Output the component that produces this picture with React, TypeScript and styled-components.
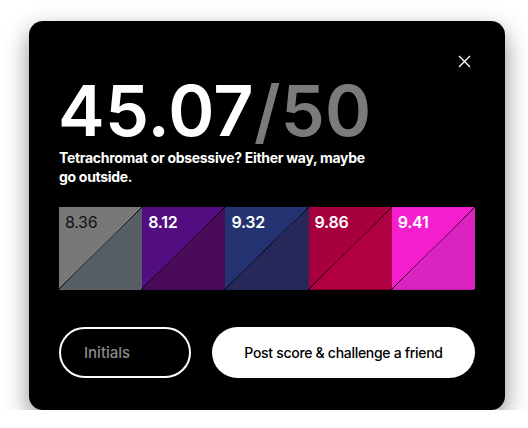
import React from "react";
import styled, { createGlobalStyle } from "styled-components";

const Global = createGlobalStyle`
  html, body { margin: 0; padding: 0; background: #ffffff; }
  body { font-family: Inter, "Liberation Sans", sans-serif; }
  * { box-sizing: border-box; }
`;

const Page = styled.div`
  padding: 21px 0 0 29px;
`;

const Card = styled.div`
  width: 476px;
  height: 389px;
  background: #000;
  border-radius: 14px;
  box-shadow: 0 10px 24px rgba(0, 0, 0, 0.45);
  padding: 0 30px;
  display: flex;
  flex-direction: column;
  position: relative;
`;

const CloseButton = styled.button`
  position: absolute;
  top: 33px;
  right: 34px;
  width: 14px;
  height: 14px;
  padding: 0;
  border: 0;
  background: transparent;
  cursor: pointer;
  display: flex;
  align-items: center;
  justify-content: center;
`;

const Score = styled.div`
  margin-top: 55px;
  font-size: 70px;
  line-height: 70px;
  font-weight: 600;
  letter-spacing: 0.3px;
  color: #fff;
  margin-left: -1px;
`;

const Total = styled.span`
  color: #7b7b7b;
`;

const Tagline = styled.p`
  margin: 2px 0 0;
  max-width: 318px;
  font-size: 14px;
  line-height: 19px;
  font-weight: 700;
  color: #fff;
  letter-spacing: -0.3px;
`;

const Swatches = styled.div`
  margin-top: 21px;
  display: grid;
  grid-template-columns: repeat(5, 1fr);
  height: 83px;
`;

const Swatch = styled.div<{ $a: string; $b: string; $dark?: boolean }>`
  background: linear-gradient(
    to bottom right,
    ${(p) => p.$a} calc(50% - 0.5px),
    rgba(0, 0, 0, 0.1) 50%,
    ${(p) => p.$b} calc(50% + 0.5px)
  );
  border-bottom: 1px solid rgba(0, 0, 0, 0.2);
  padding: 4px 6px;
  font-size: 16px;
  line-height: 22px;
  font-weight: ${(p) => (p.$dark ? 400 : 600)};
  letter-spacing: -0.3px;
  color: ${(p) => (p.$dark ? "#111" : "#fff")};
`;

const Actions = styled.div`
  margin-top: 37px;
  display: flex;
  gap: 21px;
  align-items: center;
`;

const InitialsInput = styled.input`
  width: 132px;
  height: 51px;
  border: 2px solid #fff;
  border-radius: 26px;
  background: transparent;
  color: #fff;
  padding: 0 0 0 23px;
  font-family: Inter, "Liberation Sans", sans-serif;
  font-size: 15px;
  font-weight: 500;
  outline: none;
  &::placeholder {
    color: #8a8a8a;
  }
`;

const PostButton = styled.button`
  flex: 1;
  height: 51px;
  border: 0;
  border-radius: 26px;
  background: #fff;
  color: #000;
  font-family: Inter, "Liberation Sans", sans-serif;
  font-size: 14px;
  font-weight: 500;
  letter-spacing: -0.3px;
  cursor: pointer;
`;

const swatches = [
  { v: "8.36", a: "#787878", b: "#585f64", dark: true },
  { v: "8.12", a: "#520d80", b: "#4a0c58" },
  { v: "9.32", a: "#233270", b: "#27275a" },
  { v: "9.86", a: "#a8003f", b: "#b10042" },
  { v: "9.41", a: "#f31fcf", b: "#db23bf" },
];

export default function App() {
  return (
    <>
      <Global />
      <Page>
        <Card>
          <CloseButton aria-label="Close">
            <svg width="13" height="13" viewBox="0 0 13 13">
              <path d="M1 1L12 12M12 1L1 12" stroke="#fff" strokeWidth="1.4" />
            </svg>
          </CloseButton>
          <Score>
            45.07<Total>/50</Total>
          </Score>
          <Tagline>Tetrachromat or obsessive? Either way, maybe go outside.</Tagline>
          <Swatches>
            {swatches.map((s) => (
              <Swatch key={s.v} $a={s.a} $b={s.b} $dark={s.dark}>
                {s.v}
              </Swatch>
            ))}
          </Swatches>
          <Actions>
            <InitialsInput placeholder="Initials" />
            <PostButton>Post score &amp; challenge a friend</PostButton>
          </Actions>
        </Card>
      </Page>
    </>
  );
}
